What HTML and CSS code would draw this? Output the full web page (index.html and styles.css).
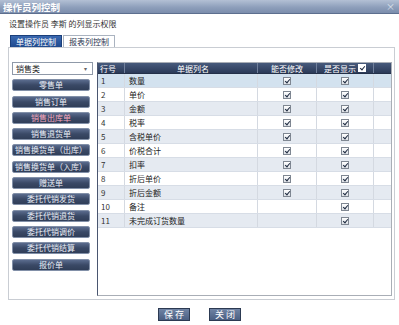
FILE: index.html
```html
<!DOCTYPE html>
<html lang="zh">
<head>
<meta charset="utf-8">
<title>操作员列控制</title>
<link rel="stylesheet" href="styles.css">
</head>
<body>
<div class="dialog">
  <div class="titlebar">
    <span class="title">操作员列控制</span>
    <span class="close">×</span>
  </div>
  <div class="subtitle">设置操作员 李斯 的列显示权限</div>
  <div class="tabs">
    <div class="tab active">单据列控制</div>
    <div class="tab">报表列控制</div>
  </div>
  <div class="panel">
    <div class="sidebar">
      <div class="select"><span>销售类</span><span class="arrow">▾</span></div>
      <div class="btn">零售单</div>
      <div class="btn">销售订单</div>
      <div class="btn selected">销售出库单</div>
      <div class="btn">销售退货单</div>
      <div class="btn">销售换货单（出库）</div>
      <div class="btn">销售换货单（入库）</div>
      <div class="btn">赠送单</div>
      <div class="btn">委托代销发货</div>
      <div class="btn">委托代销退货</div>
      <div class="btn">委托代销调价</div>
      <div class="btn">委托代销结算</div>
      <div class="btn">报价单</div>
    </div>
    <div class="grid">
      <div class="row head">
        <div class="c num">行号</div>
        <div class="c name center">单据列名</div>
        <div class="c edit">能否修改</div>
        <div class="c show">是否显示 <span class="cb head-cb"></span></div>
        <div class="c fill"></div>
      </div>
      <div class="row sel">
        <div class="c num">1</div><div class="c name">数量</div>
        <div class="c edit"><span class="cb"></span></div><div class="c show"><span class="cb"></span></div><div class="c fill"></div>
      </div>
      <div class="row">
        <div class="c num">2</div><div class="c name">单价</div>
        <div class="c edit"><span class="cb"></span></div><div class="c show"><span class="cb"></span></div><div class="c fill"></div>
      </div>
      <div class="row alt">
        <div class="c num">3</div><div class="c name">金额</div>
        <div class="c edit"><span class="cb"></span></div><div class="c show"><span class="cb"></span></div><div class="c fill"></div>
      </div>
      <div class="row">
        <div class="c num">4</div><div class="c name">税率</div>
        <div class="c edit"><span class="cb"></span></div><div class="c show"><span class="cb"></span></div><div class="c fill"></div>
      </div>
      <div class="row alt">
        <div class="c num">5</div><div class="c name">含税单价</div>
        <div class="c edit"><span class="cb"></span></div><div class="c show"><span class="cb"></span></div><div class="c fill"></div>
      </div>
      <div class="row">
        <div class="c num">6</div><div class="c name">价税合计</div>
        <div class="c edit"><span class="cb"></span></div><div class="c show"><span class="cb"></span></div><div class="c fill"></div>
      </div>
      <div class="row alt">
        <div class="c num">7</div><div class="c name">扣率</div>
        <div class="c edit"><span class="cb"></span></div><div class="c show"><span class="cb"></span></div><div class="c fill"></div>
      </div>
      <div class="row">
        <div class="c num">8</div><div class="c name">折后单价</div>
        <div class="c edit"><span class="cb"></span></div><div class="c show"><span class="cb"></span></div><div class="c fill"></div>
      </div>
      <div class="row alt">
        <div class="c num">9</div><div class="c name">折后金额</div>
        <div class="c edit"><span class="cb"></span></div><div class="c show"><span class="cb"></span></div><div class="c fill"></div>
      </div>
      <div class="row">
        <div class="c num">10</div><div class="c name">备注</div>
        <div class="c edit"></div><div class="c show"><span class="cb"></span></div><div class="c fill"></div>
      </div>
      <div class="row alt">
        <div class="c num">11</div><div class="c name">未完成订货数量</div>
        <div class="c edit"></div><div class="c show"><span class="cb"></span></div><div class="c fill"></div>
      </div>
    </div>
  </div>
  <div class="footer">
    <div class="fbtn">保存</div>
    <div class="fbtn">关闭</div>
  </div>
</div>
</body>
</html>
```

FILE: styles.css
```css
* { box-sizing: border-box; }
html, body {
  margin: 0;
  padding: 0;
  background: #ffffff;
}
body {
  width: 399px;
  height: 325px;
  overflow: hidden;
  font-family: "Noto Sans CJK SC", "Noto Sans", sans-serif;
  font-size: 8px;
  color: #222;
}
.dialog {
  width: 399px;
  height: 325px;
  display: flex;
  flex-direction: column;
}
.titlebar {
  height: 14px;
  background: linear-gradient(#b3c0d4, #8e9fbb 55%, #7b8dac);
  border-bottom: 1px solid #5d6f8f;
  display: flex;
  align-items: center;
  justify-content: space-between;
  padding: 0 4px 0 3px;
}
.title {
  color: #fff;
  font-weight: bold;
  font-size: 9.5px;
  line-height: 14px;
}
.close {
  color: #dfe5ee;
  font-size: 9px;
  line-height: 14px;
}
.subtitle {
  margin-top: 4px;
  height: 12px;
  line-height: 12px;
  padding-left: 9px;
  font-size: 8px;
  color: #333;
}
.tabs {
  margin-top: 5px;
  display: flex;
  padding-left: 10px;
  height: 12px;
  position: relative;
  z-index: 1;
}
.tab {
  height: 12px;
  line-height: 11px;
  padding: 0 5px;
  border: 1px solid #aab3c0;
  border-bottom: none;
  background: #fff;
  color: #2a3550;
  font-size: 8px;
  margin-right: 1px;
}
.tab.active {
  background: linear-gradient(#3a68b0, #1f4a8e);
  border-color: #1b3f7a;
  color: #fff;
}
.panel {
  margin: 0 4px 0 8px;
  height: 253px;
  border: 1px solid #c9cdd3;
  display: flex;
  gap: 4px;
  padding: 14px 2px 3px 3px;
}
.sidebar {
  width: 81px;
  display: flex;
  flex-direction: column;
  gap: 4.3px;
}
.select {
  height: 13px;
  border: 1px solid #8f99a8;
  background: #fff;
  display: flex;
  justify-content: space-between;
  align-items: center;
  padding: 0 5px 0 3px;
  font-size: 8px;
  color: #222;
}
.arrow {
  font-size: 6px;
  color: #666;
}
.btn {
  width: 78px;
  height: 12px;
  line-height: 10px;
  text-align: center;
  border: 1px solid #8290a8;
  border-radius: 2px;
  background: linear-gradient(#5a6b8d, #3a4966 50%, #303e58);
  color: #e9edf5;
  font-size: 8px;
  white-space: nowrap;
  overflow: hidden;
}
.btn.selected {
  color: #f4a6bc;
}
.grid {
  width: 295px;
  border: 1px solid #a9aeb6;
  border-left-color: #4a5670;
  display: flex;
  flex-direction: column;
}
.row {
  display: flex;
  height: 14px;
  border-bottom: 1px solid #d7dde6;
  background: #fff;
}
.row.alt { background: #e5eaf1; }
.row.sel { background: #d3e2ef; }
.row.head {
  height: 11px;
  background: linear-gradient(#475a7c, #2b3a58);
  border-bottom: 1px solid #233049;
  color: #fff;
}
.c {
  height: 100%;
  display: flex;
  align-items: center;
  border-right: 1px solid #d4d9e1;
  font-size: 8px;
}
.head .c { border-right-color: #71809c; justify-content: center; }
.num { width: 27px; padding-left: 3px; color: #333; }
.head .num { justify-content: flex-start; padding-left: 2px; color: #fff; }
.name { width: 133px; padding-left: 4px; }
.center { justify-content: center; }
.edit { width: 59px; justify-content: center; }
.show { width: 57px; justify-content: center; }
.fill { flex: 1; border-right: none; }
.cb {
  display: inline-block;
  width: 8px;
  height: 8px;
  border: 1px solid #7f8792;
  background: linear-gradient(#ffffff, #dde1e6);
  position: relative;
}
.cb::after {
  content: "";
  position: absolute;
  left: 2px;
  top: 0px;
  width: 2px;
  height: 4px;
  border-right: 1.3px solid #1d2a40;
  border-bottom: 1.3px solid #1d2a40;
  transform: rotate(40deg);
}
.head-cb {
  margin-left: 2px;
  background: #fff;
  border-color: #fff;
}
.footer {
  display: flex;
  justify-content: center;
  gap: 19px;
  margin-top: 8px;
}
.fbtn {
  width: 32px;
  height: 13px;
  line-height: 11px;
  text-align: center;
  border: 1px solid #2c3a52;
  background: linear-gradient(#6f83a4, #4b5f82);
  color: #fff;
  font-size: 9px;
  letter-spacing: 2px;
  padding-left: 2px;
}
```
